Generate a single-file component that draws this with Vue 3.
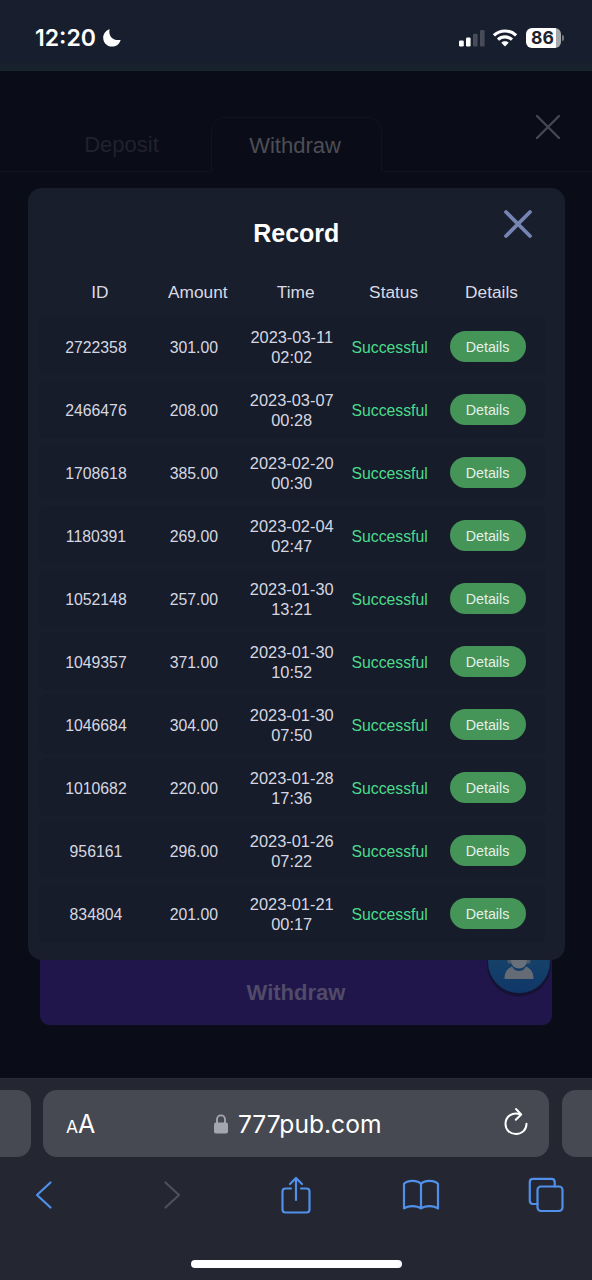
<script setup>
const columns = ['ID', 'Amount', 'Time', 'Status', 'Details']
const records = [
  { id: '2722358', amount: '301.00', date: '2023-03-11', time: '02:02' },
  { id: '2466476', amount: '208.00', date: '2023-03-07', time: '00:28' },
  { id: '1708618', amount: '385.00', date: '2023-02-20', time: '00:30' },
  { id: '1180391', amount: '269.00', date: '2023-02-04', time: '02:47' },
  { id: '1052148', amount: '257.00', date: '2023-01-30', time: '13:21' },
  { id: '1049357', amount: '371.00', date: '2023-01-30', time: '10:52' },
  { id: '1046684', amount: '304.00', date: '2023-01-30', time: '07:50' },
  { id: '1010682', amount: '220.00', date: '2023-01-28', time: '17:36' },
  { id: '956161', amount: '296.00', date: '2023-01-26', time: '07:22' },
  { id: '834804', amount: '201.00', date: '2023-01-21', time: '00:17' },
]
</script>

<template>
  <div class="phone">
    <header class="status-bar">
      <div class="clock">
        <span>12:20</span>
        <svg width="20" height="20" viewBox="0 0 20 20"><path d="M7.6 1.2C6.1 7.8 10.7 13.2 18.6 11.9C17.5 16 14 18.6 10 18.6C5 18.6 1.2 14.8 1.2 9.8C1.2 5.8 3.8 2.3 7.6 1.2Z" fill="#fff" /></svg>
      </div>
      <div class="signals">
        <svg width="27" height="18" viewBox="0 0 27 18">
          <rect x="1" y="11.5" width="4.8" height="6" rx="1.2" fill="#fff" />
          <rect x="8" y="8.6" width="4.6" height="8.9" rx="1.2" fill="#fff" />
          <rect x="15" y="4.8" width="4.6" height="12.7" rx="1.2" fill="#484c58" />
          <rect x="22" y="1" width="4.6" height="16.5" rx="1.2" fill="#484c58" />
        </svg>
        <svg class="wifi" width="26" height="20" viewBox="0 0 26 20" fill="none" stroke="#fff" stroke-width="3.2">
          <path d="M1.9 7.4C8.2 1.5 17.8 1.5 24.1 7.4" />
          <path d="M6 11.7C10 8 16 8 20 11.7" />
          <path d="M13 18.4L9.3 14.7C11.4 12.9 14.6 12.9 16.7 14.7Z" fill="#fff" stroke="none" />
        </svg>
        <div class="battery"><span>86</span></div>
        <i class="battery-tip"></i>
      </div>
    </header>

    <main class="page">
      <nav class="tabs">
        <span class="tab">Deposit</span>
        <span class="tab active">Withdraw</span>
        <svg class="page-close" width="28" height="28" viewBox="0 0 28 28"><path d="M3 3L25 25M25 3L3 25" stroke="#464750" stroke-width="2.4" stroke-linecap="round" /></svg>
      </nav>
      <div class="submit">Withdraw</div>
      <svg class="support" width="68" height="70" viewBox="0 0 68 70">
        <defs>
          <linearGradient id="disc" x1="0" y1="0" x2="0" y2="1"><stop offset="0" stop-color="#174a6b" /><stop offset="1" stop-color="#113768" /></linearGradient>
        </defs>
        <circle cx="34" cy="36.5" r="32" fill="#151333" />
        <circle cx="34" cy="34" r="31" fill="url(#disc)" />
        <path d="M22 30H46L45 35.5H23Z" fill="#4d5966" />
        <path d="M19.5 51C19.5 43 23 40.5 27 38.5C30 44.5 38 44.5 41 38.5C45 40.5 48.5 43 48.5 51Z" fill="#646b75" />
        <circle cx="34" cy="32.5" r="8" fill="#6a707a" />
      </svg>

      <section class="dialog">
        <h1>Record</h1>
        <svg class="dialog-close" width="32" height="32" viewBox="0 0 32 32"><path d="M4 4L28 28M28 4L4 28" stroke="#7684b4" stroke-width="3.8" stroke-linecap="round" /></svg>
        <div class="head">
          <span v-for="column in columns" :key="column">{{ column }}</span>
        </div>
        <div class="rows">
          <div v-for="record in records" :key="record.id" class="row">
            <span>{{ record.id }}</span>
            <span>{{ record.amount }}</span>
            <span class="when">{{ record.date }}<br />{{ record.time }}</span>
            <span class="ok">Successful</span>
            <button>Details</button>
          </div>
        </div>
      </section>
    </main>

    <footer class="browser">
      <div class="address-row">
        <div class="side left"></div>
        <div class="address">
          <div class="text-size"><span>A</span><span>A</span></div>
          <div class="site">
            <svg width="16" height="20" viewBox="0 0 16 20"><rect x="1" y="8.4" width="14" height="11" rx="2" fill="#a5a5b2" /><path d="M4 9V5.5C4 0 12 0 12 5.5V9" fill="none" stroke="#a5a5b2" stroke-width="1.9" /></svg>
            <span>777pub.com</span>
          </div>
          <svg class="reload" width="26" height="30" viewBox="0 0 26 30" fill="none" stroke="#fff" stroke-width="2" stroke-linecap="round" stroke-linejoin="round">
            <path d="M17 7.2C9 4.5 2.500 9.800 2.500 17C2.500 22.800 7 27 13 27C19 27 23.500 22.800 23.500 16.800" />
            <path d="M13 2L18.200 7.500L12.800 12.800" />
          </svg>
        </div>
        <div class="side right"></div>
      </div>
      <div class="toolbar">
        <svg width="38" height="30" viewBox="-9 0 38 30"><path d="M15.500 2.500L2 15L15.500 27.500" class="stroke" /></svg>
        <svg width="38" height="30" viewBox="-12 0 38 30"><path d="M2.500 2.500L16 15L2.500 27.500" class="stroke muted" /></svg>
        <svg width="38" height="40" viewBox="-3 0 38 40"><path d="M11 13.500H5.500Q2.500 13.500 2.500 16.500V34.500Q2.500 37.500 5.500 37.500H26.500Q29.500 37.500 29.500 34.500V16.500Q29.500 13.500 26.500 13.500H21M16 25V3M10 9L16 3L22 9" class="stroke" /></svg>
        <svg width="38" height="32" viewBox="0 0 38 32"><path d="M19 5C16 .7 5 .7 2 5V29.500C6 26.300 15 26.300 19 29.500C23 26.300 32 26.300 36 29.500V5C33 .7 22 .7 19 5V29.500" class="stroke" /></svg>
        <svg width="38" height="36" viewBox="-1 0 38 36"><rect x="9.500" y="9.500" width="25" height="24.500" rx="3.500" class="stroke" /><path d="M9.500 27H5Q1.800 27 1.800 23.800V5Q1.800 1.800 5 1.800H23.500Q26.700 1.800 26.700 5V9.500" class="stroke" /></svg>
      </div>
      <div class="home"></div>
    </footer>
  </div>
</template>

<style>
body { background: #0a0c18; }
</style>

<style scoped>
* { box-sizing: border-box; }
.phone {
  width: 592px;
  height: 1280px;
  display: flex;
  flex-direction: column;
  overflow: hidden;
  font-family: "Liberation Sans", Arial, sans-serif;
  background: #0a0c18;
}
svg { display: block; flex: none; }
.status-bar {
  height: 71px;
  flex: none;
  display: flex;
  justify-content: space-between;
  padding: 0 28px 0 35px;
  background: linear-gradient(#181e2d, #171e2d 60px, #18232c 71px);
  color: #fff;
  font-family: Inter, sans-serif;
}
.clock { display: flex; align-items: center; height: 76px; gap: 6px; font-size: 23px; font-weight: 600; }
.signals { display: flex; align-items: center; height: 75px; }
.wifi { margin-left: 7px; }
.battery {
  width: 35px;
  height: 20px;
  margin-left: 8px;
  border-radius: 6px;
  background: linear-gradient(90deg, #fff 0 30px, #a5a7ab 30px);
  color: #20232e;
  font-size: 17.5px;
  line-height: 20px;
  font-weight: 700;
  padding-right: 2px;
  text-align: center;
}
.battery-tip { width: 2px; height: 6px; margin-left: 1px; border-radius: 0 2px 2px 0; background: #777b84; }

.page { height: 1007px; flex: none; position: relative; display: flex; flex-direction: column; justify-content: space-between; }
.tabs {
  height: 71px;
  margin-top: 30px;
  display: flex;
  align-items: flex-end;
  padding-left: 32px;
  border-top: 1px solid #0c0f1a;
  border-bottom: 1px solid #11131e;
  position: relative;
}
.tab { width: 179px; height: 55px; line-height: 58px; text-align: center; font-size: 22px; color: #20222d; }
.tab.active {
  width: 171px;
  margin-bottom: -1px;
  border: 1px solid #11131e;
  border-bottom-color: #0a0c18;
  border-radius: 14px 14px 0 0;
  line-height: 55px;
  padding-right: 3px;
  color: #4d4e55;
}
.page-close { position: absolute; left: 534px; top: 11px; }
.submit {
  width: 512px;
  height: 75px;
  margin: 0 0 53px 40px;
  padding-top: 10px;
  border-radius: 9px;
  background: #20164b;
  color: #504b68;
  font-size: 22px;
  font-weight: 700;
  line-height: 65px;
  text-align: center;
}
.support { position: absolute; left: 485px; top: 857px; }

.dialog {
  position: absolute;
  left: 28px;
  top: 117px;
  width: 536.5px;
  height: 772px;
  border-radius: 14px;
  background: #181e2b;
}
h1 { margin: 0; height: 87px; padding-top: 1px; color: #fff; font-size: 25px; line-height: 89px; text-align: center; }
.dialog-close { position: absolute; left: 474px; top: 20px; }
.head { display: grid; grid-template-columns: repeat(5, 97.9px); margin-left: 23px; height: 42px; line-height: 35px; font-size: 17.3px; color: #d9dae5; text-align: center; }
.rows { display: flex; flex-direction: column; gap: 5px; margin: 0 19px 0 11px; }
.row {
  height: 58.06px;
  display: grid;
  grid-template-columns: repeat(5, 97.9px);
  align-items: center;
  justify-items: center;
  padding-left: 8px;
  border-radius: 8px;
  background: #161c29;
  color: #d6d7e1;
  font-size: 15.8px;
  line-height: 20px;
  text-align: center;
}
.row span { padding-top: 3.5px; }
.row .when { font-size: 16.4px; line-height: 20px; padding-top: 2px; }
.row .ok { color: #4cda8c; }
button {
  width: 76px;
  height: 31px;
  padding: 1px 0 0;
  border: 0;
  border-radius: 16px;
  background: #459458;
  color: #e6f0e8;
  font: 14.3px "Liberation Sans", Arial, sans-serif;
}

.browser { height: 202px; flex: none; background: #242731; display: flex; flex-direction: column; align-items: center; border-top: 1px solid #292c34; }
.address-row { width: 592px; height: 67px; margin-top: 11px; display: flex; gap: 12.5px; }
.side { flex: 1; background: #464852; }
.left { border-radius: 0 14px 14px 0; }
.right { border-radius: 14px 0 0 14px; }
.address {
  width: 506px;
  display: flex;
  align-items: center;
  justify-content: space-between;
  padding: 0 20px 0 23px;
  border-radius: 14px;
  background: #464852;
  color: #fff;
  font-family: Inter, sans-serif;
}
.text-size { display: flex; align-items: baseline; font-size: 25px; }
.text-size span:first-child { font-size: 17.5px; }
.site { display: flex; align-items: center; gap: 9px; margin-right: 4px; font-size: 24.6px; }
.reload { margin-bottom: 3px; }
.toolbar { width: 592px; height: 75px; padding: 0 27px 0 26px; display: flex; align-items: center; justify-content: space-between; }
.stroke { fill: none; stroke: #5090ea; stroke-width: 2.2; stroke-linecap: round; stroke-linejoin: round; }
.muted { stroke: #4d505a; }
.home { width: 211px; height: 8px; margin-top: 28px; border-radius: 4px; background: #fff; }
</style>
